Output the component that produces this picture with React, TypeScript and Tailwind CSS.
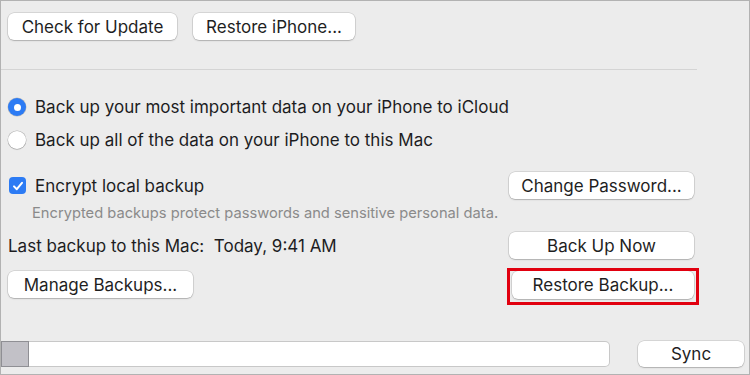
import React from "react";

const Btn: React.FC<{ label: string; className?: string }> = ({ label, className = "" }) => (
  <div
    className={`flex items-center justify-center rounded-[6px] bg-white text-[17px] text-[#1f1f1f] shadow-[0_0_0_0.5px_rgba(0,0,0,0.18),0_1px_1.5px_rgba(0,0,0,0.18)] ${className}`}
  >
    <span className="translate-y-[1px]">{label}</span>
  </div>
);

const Radio: React.FC<{ checked?: boolean }> = ({ checked }) =>
  checked ? (
    <div className="flex h-[18px] w-[18px] items-center justify-center rounded-full bg-[#2c7bf4] shadow-[0_0_0_0.5px_rgba(0,0,0,0.2)]">
      <div className="h-[7px] w-[7px] rounded-full bg-white" />
    </div>
  ) : (
    <div className="h-[18px] w-[18px] rounded-full bg-white shadow-[0_0_0_0.5px_rgba(0,0,0,0.25),0_1px_1px_rgba(0,0,0,0.1)]" />
  );

const App: React.FC = () => {
  return (
    <div className="relative flex h-[375px] w-[750px] flex-col overflow-hidden border border-[#b2b2b2] bg-[#ececec] font-['Inter',Arial,sans-serif] text-[#1d1d1f]">
      {/* top buttons */}
      <div className="flex gap-4 pl-[7px] pt-[12px]">
        <Btn label="Check for Update" className="h-[27px] w-[169px]" />
        <Btn label="Restore iPhone..." className="h-[27px] w-[162px]" />
      </div>

      <div className="mt-[29px] h-px w-[696px] bg-[#d4d4d4]" />

      {/* backup destination */}
      <div className="mt-[27px] flex h-[20px] items-center gap-[9px] pl-[7px] text-[17px]">
        <Radio checked />
        <span className="translate-y-[1px]">Back up your most important data on your iPhone to iCloud</span>
      </div>
      <div className="mt-[13px] flex h-[20px] items-center gap-[9px] pl-[7px] text-[17px]">
        <Radio />
        <span className="translate-y-[1px]">Back up all of the data on your iPhone to this Mac</span>
      </div>

      {/* encrypt row */}
      <div className="mt-[22px] flex h-[27px] w-[693px] items-center justify-between pl-[8px]">
        <div className="flex items-center gap-[9px] text-[17px]">
          <div className="flex h-[17px] w-[17px] items-center justify-center rounded-[4px] bg-[#2c7bf4]">
            <svg width="12" height="12" viewBox="0 0 12 12" fill="none">
              <path d="M2 6.4 L4.8 9.2 L10 2.8" stroke="white" strokeWidth="2" strokeLinecap="round" strokeLinejoin="round" />
            </svg>
          </div>
          <span className="translate-y-[1px]">Encrypt local backup</span>
        </div>
        <Btn label="Change Password..." className="h-[27px] w-[185px]" />
      </div>

      <div className="mt-[6px] h-[16px] pl-[31px] text-[14.7px] leading-[16px] text-[#8a8a8a]">
        Encrypted backups protect passwords and sensitive personal data.
      </div>

      <div className="mt-[11px] flex h-[27px] w-[693px] items-center justify-between pl-[7px] text-[17px]">
        <span className="translate-y-[1px]">Last backup to this Mac:&nbsp; Today, 9:41 AM</span>
        <Btn label="Back Up Now" className="h-[27px] w-[185px]" />
      </div>

      <div className="mt-[12px] flex h-[27px] w-[693px] items-center justify-between pl-[7px]">
        <Btn label="Manage Backups..." className="h-[27px] w-[185px]" />
        <div className="relative">
          <Btn label="Restore Backup..." className="h-[28px] w-[182px]" />
          <div className="absolute -inset-x-[5px] -top-[3px] -bottom-[6px] border-[3px] border-[#e1000f]" />
        </div>
      </div>

      {/* bottom bar */}
      <div className="mt-[43px] flex h-[26px] items-center">
        <div className="flex h-[26px] w-[609px]">
          <div className="h-full w-[28px] border border-[#8f8f94] bg-[#c2c1c7]" />
          <div className="h-full flex-1 rounded-r-[5px] border border-l-0 border-[#c8c8c8] bg-white" />
        </div>
        <Btn label="Sync" className="ml-[28px] h-[26px] w-[106px]" />
      </div>
    </div>
  );
};

export default App;
